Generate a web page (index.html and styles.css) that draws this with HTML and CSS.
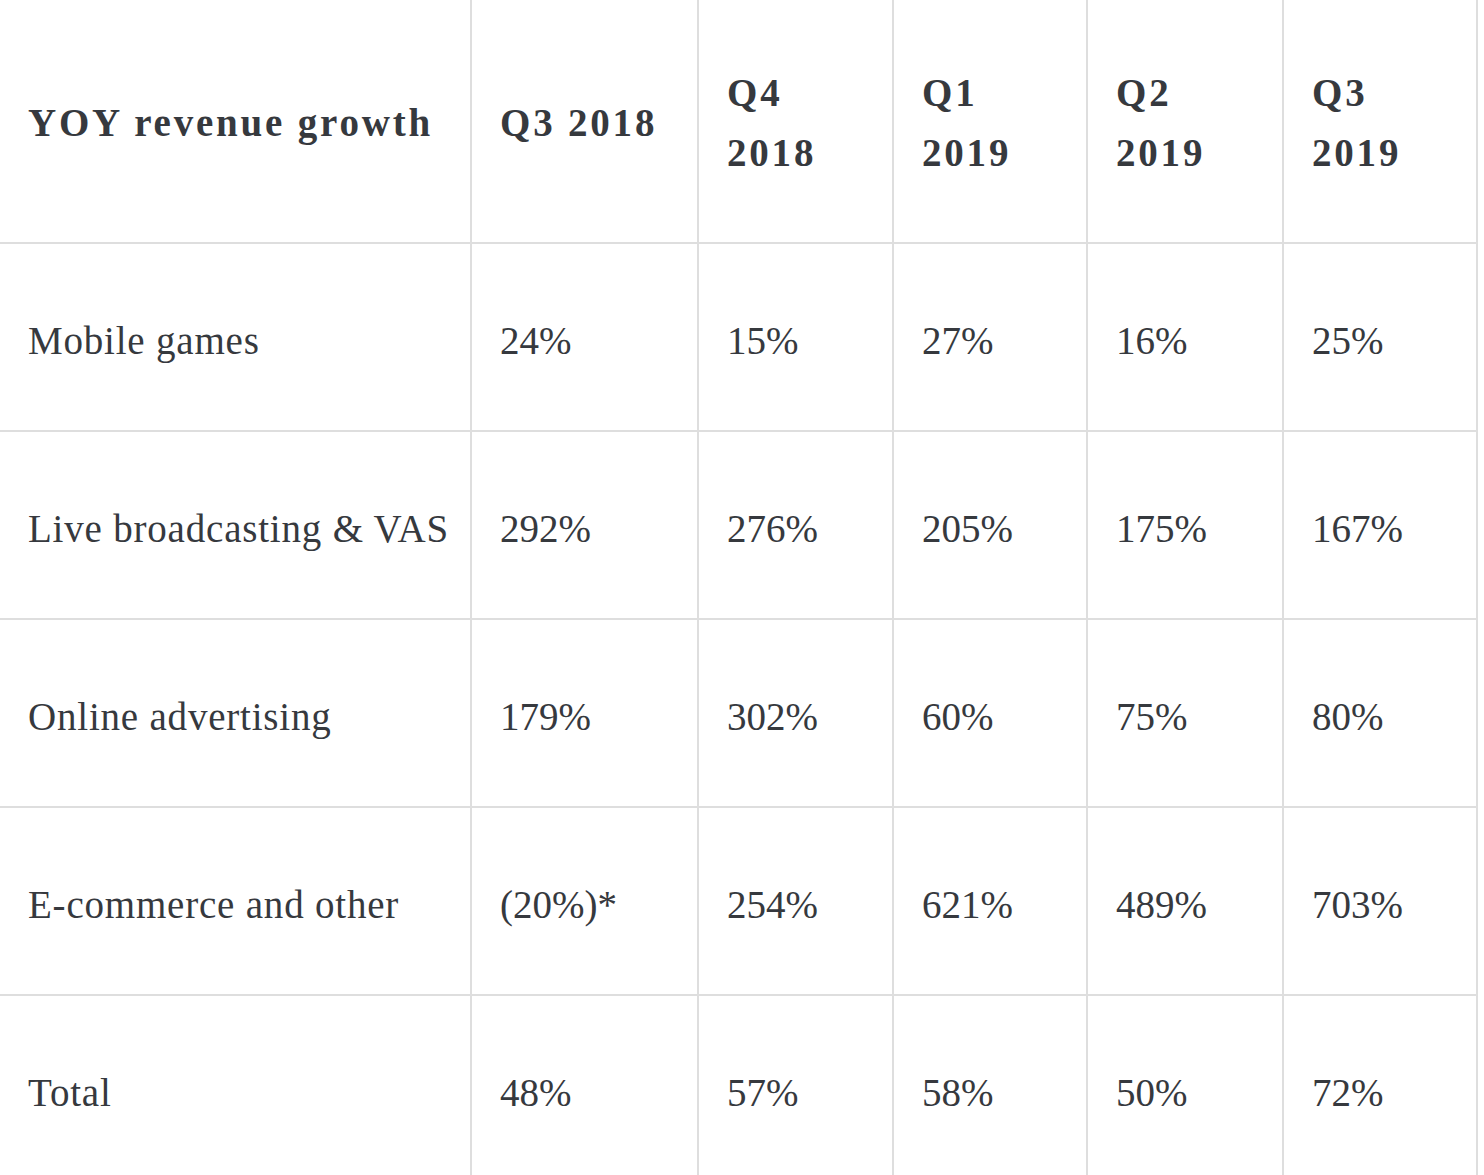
FILE: index.html
```html
<!DOCTYPE html>
<html lang="en">
<head>
<meta charset="utf-8">
<title>YOY revenue growth</title>
<link rel="stylesheet" href="styles.css">
</head>
<body>
<table class="growth">
  <colgroup>
    <col class="c-label">
    <col class="c-q1">
    <col class="c-q2">
    <col class="c-q3">
    <col class="c-q4">
    <col class="c-q5">
  </colgroup>
  <thead>
    <tr class="head-row">
      <th>YOY revenue growth</th>
      <th>Q3 2018</th>
      <th>Q4<br>2018</th>
      <th>Q1<br>2019</th>
      <th>Q2<br>2019</th>
      <th>Q3<br>2019</th>
    </tr>
  </thead>
  <tbody>
    <tr><td class="label">Mobile games</td><td>24%</td><td>15%</td><td>27%</td><td>16%</td><td>25%</td></tr>
    <tr><td class="label">Live broadcasting &amp; VAS</td><td>292%</td><td>276%</td><td>205%</td><td>175%</td><td>167%</td></tr>
    <tr><td class="label">Online advertising</td><td>179%</td><td>302%</td><td>60%</td><td>75%</td><td>80%</td></tr>
    <tr><td class="label">E-commerce and other</td><td>(20%)*</td><td>254%</td><td>621%</td><td>489%</td><td>703%</td></tr>
    <tr><td class="label">Total</td><td>48%</td><td>57%</td><td>58%</td><td>50%</td><td>72%</td></tr>
  </tbody>
</table>
</body>
</html>
```
FILE: styles.css
```css
html, body {
  margin: 0;
  padding: 0;
  background: #ffffff;
}

body {
  overflow: hidden;
}

.growth {
  table-layout: fixed;
  width: 1478px;
  border-collapse: separate;
  border-spacing: 0;
  font-family: "Liberation Serif", "Times New Roman", serif;
  color: #36393e;
}

.c-label { width: 472px; }
.c-q1 { width: 227px; }
.c-q2 { width: 195px; }
.c-q3 { width: 194px; }
.c-q4 { width: 196px; }
.c-q5 { width: 194px; }

.growth th,
.growth td {
  box-sizing: border-box;
  padding: 0 8px 0 28px;
  text-align: left;
  vertical-align: middle;
  border-right: 2px solid #dedede;
  border-bottom: 2px solid #dedede;
}

.growth th {
  height: 244px;
  font-size: 39px;
  font-weight: 700;
  line-height: 60px;
  letter-spacing: 2.8px;
  padding-top: 4px;
}

.growth td {
  height: 188px;
  font-size: 39px;
  font-weight: 400;
  line-height: 60px;
  padding-top: 8px;
}

.growth td.label {
  letter-spacing: 0.8px;
}
```
